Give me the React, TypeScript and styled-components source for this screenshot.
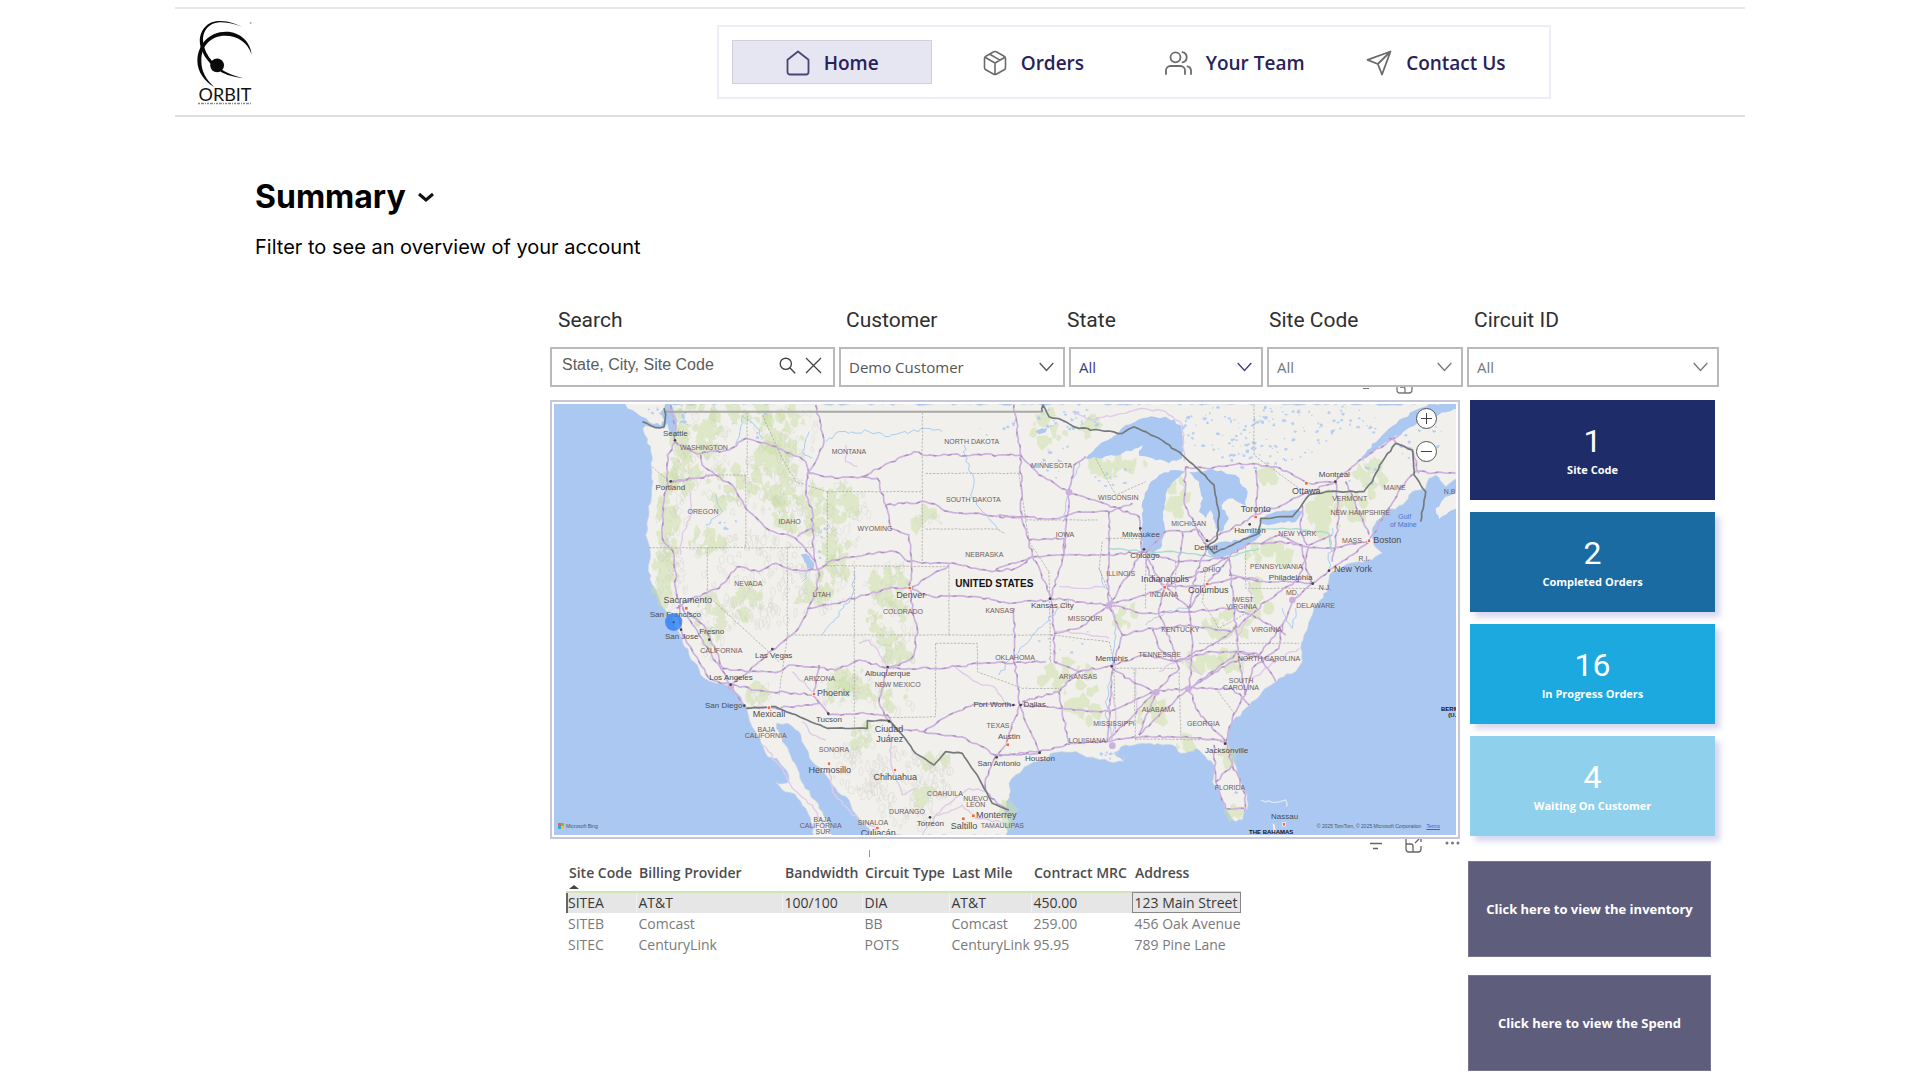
import React from "react";
import styled, { createGlobalStyle } from "styled-components";

const GlobalStyle = createGlobalStyle`
  *, *::before, *::after { box-sizing: border-box; }
  body { margin: 0; background: #ffffff; color: #000000; font-family: "Open Sans", "Noto Sans", sans-serif; }
  button, input, select { font: inherit; }
`;

const Page = styled.div`
  max-width: 1570px;
  margin: 0 auto;
  padding: 7px 0 9px;
`;

const Header = styled.header`
  display: flex;
  align-items: center;
  justify-content: space-between;
  padding: 0 194px 0 22px;
  border-top: 2px solid #e8e8e9;
  border-bottom: 2px solid #dfdfe1;
`;

const Brand = styled.a`
  display: flex;
  flex-direction: column;
  color: #111111;
  text-decoration: none;
  width: 56px;
`;

const BrandName = styled.span`
  font: 400 18px/14px Lato, sans-serif;
  text-align: center;
`;

const Nav = styled.nav`
  display: flex;
  gap: 1px;
  width: 834px;
  margin: 16px 0;
  padding: 13px;
  border: 2px solid #eeecf8;
`;

const NavLink = styled.a<{ $active?: boolean }>`
  flex: 1;
  display: flex;
  align-items: center;
  justify-content: center;
  gap: 14px;
  height: 44px;
  padding-top: 1px;
  font-size: 19px;
  font-weight: 600;
  color: #28225a;
  text-decoration: none;
  white-space: nowrap;
  background: ${(p) => (p.$active ? "#e6e5f2" : "transparent")};
  border: 1px solid ${(p) => (p.$active ? "#d2d1d9" : "transparent")};
  svg { flex: none; stroke: ${(p) => (p.$active ? "#4a4575" : "#6b6b6b")}; }
`;

const Intro = styled.section`
  margin: 60px 0 0 80px;
  font-family: Inter, sans-serif;
`;

const TitleRow = styled.div`
  display: flex;
  align-items: center;
  gap: 12px;
`;

const Title = styled.h1`
  margin: 0;
  font-size: 32px;
  line-height: 40px;
  font-weight: 700;
`;

const PlainButton = styled.button`
  display: flex;
  padding: 0;
  border: 0;
  background: none;
  cursor: pointer;
`;

const Subtitle = styled.p`
  margin: 18px 0 0;
  font-size: 20px;
  line-height: 24px;
`;

const Report = styled.main`
  margin: 49px 26px 0 375px;
`;

const LabelRow = styled.div`
  display: grid;
  grid-template-columns: 288fr 221fr 202fr 205fr 245fr;
  padding-left: 8px;
  font: 400 21px/24px Roboto, sans-serif;
  color: #2f2f2f;
`;

const FieldRow = styled.div`
  display: grid;
  grid-template-columns: 285fr 226fr 194fr 196fr 252fr;
  gap: 4px;
  margin-top: 15px;
`;

const Field = styled.div`
  display: flex;
  align-items: center;
  height: 40px;
  border: 2px solid #b9b9b9;
  background: #ffffff;
`;

const SearchInput = styled.input`
  flex: 1;
  min-width: 0;
  height: 36px;
  padding: 0 0 4px 10px;
  border: 0;
  outline: 0;
  background: none;
  font-family: "Liberation Sans", Arial, sans-serif;
  font-size: 16px;
  color: #5c5c5c;
  &::placeholder { color: #5c5c5c; opacity: 1; }
`;

const FieldIcons = styled.div`
  display: flex;
  gap: 9px;
  padding: 0 11px 3px 0;
`;

const SelectBox = styled(Field)<{ $tint: string }>`
  display: grid;
  color: ${(p) => p.$tint};
  > * { grid-area: 1 / 1; }
  > svg { justify-self: end; margin-right: 9px; pointer-events: none; }
`;

const Select = styled.select`
  width: 100%;
  height: 36px;
  padding: 0 30px 0 8px;
  border: 0;
  outline: 0;
  appearance: none;
  background: transparent;
  font-size: 15px;
  color: inherit;
`;

const Hints = styled.div`
  display: flex;
  gap: 27px;
  height: 13px;
  padding-left: 813px;
`;

const Columns = styled.div`
  display: grid;
  grid-template-columns: minmax(0, 910fr) minmax(0, 252fr);
  column-gap: 7px;
  align-items: start;
`;

const MapFrame = styled.section`
  position: relative;
  padding: 2px;
  border: 2px solid #c6c6d6;
`;

const MapSvg = styled.svg`
  display: block;
  width: 100%;
  aspect-ratio: 902 / 431;
  background: #abc8f2;
  font-family: "Liberation Sans", Arial, sans-serif;
`;

const ZoomControls = styled.div`
  position: absolute;
  top: 6px;
  right: 21px;
  display: flex;
  flex-direction: column;
  gap: 12px;
`;

const ZoomButton = styled.button`
  display: flex;
  align-items: center;
  justify-content: center;
  width: 21px;
  height: 21px;
  padding: 0;
  border: 1px solid #555555;
  border-radius: 50%;
  background: #ffffff;
`;

const MapCredit = styled.div<{ $side: "left" | "right" }>`
  position: absolute;
  bottom: 7px;
  ${(p) => (p.$side === "left" ? "left: 6px" : "right: 18px")};
  display: flex;
  align-items: center;
  gap: 2px;
  font: 400 5px/8px "Liberation Sans", Arial, sans-serif;
  color: #47566e;
  a { margin-left: 3px; color: #4560c0; }
`;

const VisualTools = styled.div`
  display: flex;
  justify-content: flex-end;
  gap: 23px;
  height: 24px;
`;

const TickMark = styled.span`
  width: 1px;
  height: 7px;
  margin: 11px auto 0 319px;
  background: #999999;
`;

const Table = styled.table`
  width: 675px;
  margin-left: 16px;
  table-layout: fixed;
  border-collapse: collapse;
  font-size: 14px;
  line-height: 20px;
  color: #7a7a7a;
  white-space: nowrap;
`;

const HeadCell = styled.th<{ $w: number }>`
  width: ${(p) => p.$w}px;
  height: 29px;
  padding: 0 0 0 3px;
  border-bottom: 2px solid #d5e3bb;
  text-align: left;
  vertical-align: top;
  font-weight: 600;
  color: #4c4c4c;
  svg { display: block; margin-top: 2px; }
`;

const Row = styled.tr<{ $selected?: boolean }>`
  height: 21px;
  background: ${(p) => (p.$selected ? "#e6e6e6" : "transparent")};
  color: ${(p) => (p.$selected ? "#3a3a3a" : "inherit")};
  td:first-child { box-shadow: ${(p) => (p.$selected ? "inset 2px 0 #666666" : "none")}; }
  td:last-child { outline: ${(p) => (p.$selected ? "1px solid #888888" : "none")}; outline-offset: -1px; }
  td + td { border-left: 1px solid ${(p) => (p.$selected ? "#f2f2f2" : "transparent")}; }
`;

const Cell = styled.td`
  padding: 0 0 0 2px;
`;

const CardStack = styled.div`
  display: flex;
  flex-direction: column;
  gap: 12px;
  padding: 0 4px 0 3px;
`;

const Card = styled.div<{ $bg: string; $raised: boolean }>`
  display: flex;
  flex-direction: column;
  align-items: center;
  height: 100px;
  padding-top: 22px;
  background: ${(p) => p.$bg};
  box-shadow: ${(p) => (p.$raised ? "5px 5px 6px #d6d6ef" : "none")};
  color: #ffffff;
`;

const CardValue = styled.span`
  font: 400 32px/38px Roboto, sans-serif;
`;

const CardLabel = styled.span`
  font-size: 11px;
  line-height: 20px;
  font-weight: 700;
`;

const ActionStack = styled.div`
  display: flex;
  flex-direction: column;
  gap: 18px;
  margin-top: 25px;
  padding: 0 8px 0 1px;
`;

const ActionButton = styled.button`
  height: 96px;
  padding: 0;
  border: 1px solid #77758f;
  background: #5f5d7c;
  color: #ffffff;
  font-size: 13px;
  font-weight: 700;
  cursor: pointer;
`;

/* ---------- icons ---------- */

const iconProps = { fill: "none", strokeWidth: 1.8, strokeLinecap: "round", strokeLinejoin: "round" } as const;

const HomeIcon = () => (
  <svg width="24" height="26" viewBox="0 0 24 26" {...iconProps} aria-hidden="true">
    <path d="M1.500 9.700 12 1.500l10.500 8.200V22a2.500 2.500 0 0 1-2.500 2.500H4A2.500 2.500 0 0 1 1.500 22Z" />
  </svg>
);
const BoxIcon = () => (
  <svg width="24" height="26" viewBox="0 0 24 26" {...iconProps} strokeWidth={1.6} aria-hidden="true">
    <path d="M10.800 1.800a2.400 2.400 0 0 1 2.400 0l8 4.400A2.400 2.400 0 0 1 22.500 8.300v9.400a2.400 2.400 0 0 1-1.300 2.100l-8 4.400a2.400 2.400 0 0 1-2.400 0l-8-4.400a2.400 2.400 0 0 1-1.300-2.100V8.300a2.400 2.400 0 0 1 1.300-2.100Z M2 7.200l10 5.800 10-5.800 M12 13v11.500 M6.800 4.200l10.200 5.900" />
  </svg>
);
const TeamIcon = () => (
  <svg width="27" height="26" viewBox="0 0 27 26" {...iconProps} aria-hidden="true">
    <circle cx="10.500" cy="7.300" r="5" />
    <path d="M1 24v-3.500a4.500 4.500 0 0 1 4.500-4.500h10a4.500 4.500 0 0 1 4.500 4.500V24 M17.500 2.200a5.200 5.200 0 0 1 0 10.200 M22.500 16.400a4.500 4.500 0 0 1 3.500 4.300V24" />
  </svg>
);
const SendIcon = () => (
  <svg width="26" height="26" viewBox="0 0 26 26" {...iconProps} aria-hidden="true">
    <path d="M24.500 1.500 1.500 9.800l10.300 4.200L16 24.500Z M24.500 1.500 11.800 14" />
  </svg>
);
const Chevron = () => (
  <svg width="15" height="10" viewBox="0 0 15 10" fill="none" stroke="currentColor" strokeWidth="1.300" aria-hidden="true">
    <path d="M.7 1 7.500 8.500 14.300 1" />
  </svg>
);

const Logo = () => (
  <svg width="56" height="68" viewBox="0 0 56 69" aria-hidden="true">
    <path fill="#0a0a0a" d="M48 9C38 4 24-1 13 4 2 10 0 23 5 33c3 7 7 11 12 16l2-2C13 41 9 36 7 29 4 19 6 10 15 5c10-4 23 0 33 4Z" />
    <path fill="#0a0a0a" d="M55 36C54 24 44 13 29 13 12 13 0 26 0 43c0 10 7 20 17 26C8 60 4 53 4 42 4 27 14 17 28 17c13 0 23 7 27 19Z" />
    <circle cx="20" cy="47" r="7" fill="#0a0a0a" />
    <path fill="#0a0a0a" d="M24 51c6 4 14 7 23 9-9-1-18-3-24-7Z" />
    <circle cx="54" cy="4" r="1" fill="#aaaaaa" />
  </svg>
);

/* ---------- map drawing ---------- */

type Pt = [number, number];

const parse = (s: string): Pt[] => s.trim().split(/\s+/).map((p) => p.split(",").map(Number) as Pt);

const randomFrom = (seed: number) => {
  let v = seed % 2147483647 || 7;
  return () => {
    v = (v * 48271) % 2147483647;
    return v / 2147483647;
  };
};

// Breaks each leg into short steps and nudges them, so lines look surveyed instead of ruled.
const rough = (s: string, amp: number, close = false) => {
  const pts = parse(s);
  if (close) pts.push(pts[0]);
  const rnd = randomFrom(Math.round(pts[0][0] * 31 + pts[0][1] * 17 + pts.length * 101 + 5));
  const out: string[] = [`M${pts[0][0]} ${pts[0][1]}`];
  for (let i = 1; i < pts.length; i++) {
    const [x0, y0] = pts[i - 1];
    const [x1, y1] = pts[i];
    const n = Math.max(1, Math.round(Math.hypot(x1 - x0, y1 - y0) / 13));
    for (let k = 1; k <= n; k++) {
      const j = k === n ? 0 : amp;
      const x = x0 + ((x1 - x0) * k) / n + (rnd() - 0.5) * j;
      const y = y0 + ((y1 - y0) * k) / n + (rnd() - 0.5) * j;
      out.push(`L${x.toFixed(1)} ${y.toFixed(1)}`);
    }
  }
  return out.join("") + (close ? "Z" : "");
};

// Scatter of small irregular patches inside an ellipse.
const scatter = (cx: number, cy: number, rx: number, ry: number, n: number, size: number, slant = 1) => {
  const rnd = randomFrom(Math.round(cx * 13 + cy * 7 + n));
  let d = "";
  for (let i = 0; i < n; i++) {
    const a = rnd() * Math.PI * 2;
    const r = Math.sqrt(rnd());
    const x = cx + Math.cos(a) * r * rx;
    const y = cy + Math.sin(a) * r * ry;
    const sides = 7;
    const base = size * (0.4 + rnd());
    for (let k = 0; k < sides; k++) {
      const t = (k / sides) * Math.PI * 2;
      const q = base * (0.4 + rnd() * 0.9);
      d += `${k ? "L" : "M"}${(x + Math.cos(t) * q).toFixed(1)} ${(y + Math.sin(t) * q * slant).toFixed(1)}`;
    }
    d += "Z";
  }
  return d;
};

const EAST = 1350;

const mainland =
  "365,27 375,50 385,75 380,100 375,125 362,118 355,85 345,100 318,98 290,92 282,100 295,130 305,170 308,220 312,260 308,300 300,350 296,400 290,420 300,450 304,490 298,530 310,570 330,610 345,640 355,655 372,680 385,705 400,740 420,780 445,810 455,840 480,858 520,865 545,880 565,895 580,920 592,940 605,985 625,1020 640,1050 650,1075 690,1100 715,1130 720,1160 700,1166 680,1160 700,1185 720,1192 745,1208 770,1240 785,1270 795,1322 850,1322 835,1280 820,1250 790,1210 765,1170 745,1120 720,1070 700,1040 690,1010 683,985 715,985 750,1010 765,1050 790,1100 830,1140 860,1180 900,1215 910,1245 930,1270 960,1300 970,1322 1370,1322 1380,1280 1365,1245 1372,1220 1385,1190 1380,1165 1400,1140 1440,1110 1490,1092 1505,1075 1540,1070 1590,1075 1640,1090 1680,1100 1725,1100 1695,1075 1730,1050 1780,1045 1840,1050 1870,1050 1895,1075 1940,1060 1970,1085 1995,1110 1990,1160 2015,1200 2030,1240 2060,1280 2080,1275 2095,1240 2095,1200 2065,1130 2045,1080 2035,1040 2045,990 2090,940 2140,890 2190,850 2240,830 2260,800 2255,760 2265,720 2285,670 2295,640 2335,590 2340,555 2350,530 2400,505 2430,500 2470,495 2500,475 2475,450 2470,400 2510,350 2560,330 2590,290 2630,280 2640,250 2660,240 2690,275 2724,250 2724,27";

const lakes = [
  "1610,190 1650,150 1700,120 1730,90 1780,70 1850,65 1895,90 1905,130 1900,190 1860,205 1810,190 1770,182 1780,150 1720,175 1660,190",
  "1780,470 1778,400 1780,320 1800,270 1830,240 1880,225 1910,230 1870,262 1850,300 1842,350 1850,410 1835,460 1810,475",
  "1920,232 1950,260 1962,310 1950,350 1970,370 1985,345 2000,400 2015,412 2040,370 2018,330 2050,310 2090,332 2096,290 2060,240 1990,222",
  "1975,460 2010,442 2070,435 2120,410 2138,420 2090,455 2040,480 2000,490 1978,476",
  "2130,376 2170,355 2230,345 2262,350 2240,380 2180,386 2140,386",
  "2640,27 2724,27 2724,42 2630,70 2570,105 2530,130 2450,190 2438,186 2500,120 2550,75 2600,45",
  "755,478 772,476 796,505 795,525 775,522",
  "1460,110 1480,100 1500,95 1490,112 1470,118",
];

const westRoads = [
  "365,30 380,110 378,140 355,180 355,260 345,320 340,430 375,480 383,600 410,660 440,700 500,800 545,870 590,940",
  "390,630 400,720 450,800 480,850 545,870",
  "415,650 470,700 510,790 525,825",
  "378,140 440,175 540,165 590,130 680,155 770,200 780,235 870,250 940,245 1000,215 1095,170 1120,180 1415,180",
  "365,260 500,240 550,270 600,350 660,405 740,430 800,500",
  "455,180 460,210 500,240",
  "800,30 825,140 800,200 775,235 770,300 790,340 790,400 745,425",
  "790,400 795,480 810,530 805,580 775,650 740,710 670,765 600,830 545,870",
  "383,640 430,610 510,580 565,515 630,530 680,505 730,525 800,525 850,495 960,475 1040,470 1080,500 1200,505 1330,530 1400,520 1450,485",
  "940,245 985,250 1010,330 1130,320 1200,350 1380,365 1430,368",
  "1010,330 1025,400 1080,420 1088,500 1083,580 1090,640 1105,700 1095,780 1070,800 1015,820 990,920 1020,980",
  "775,640 880,620 950,600 1020,580 1083,580 1150,605 1280,605 1380,625 1500,615",
  "1083,580 1140,545 1200,510",
  "520,820 600,830 690,830 720,810 860,825 930,795 1015,820 1160,820 1300,805 1490,800",
  "545,870 620,885 790,900 840,960 930,955 1015,960 1040,1000 1125,1010 1250,1030 1340,1080 1470,1075",
  "590,940 680,940 810,925",
  "1125,1010 1200,960 1290,925 1400,930",
  "810,810 800,850 795,900",
  "1340,1085 1310,1150 1310,1190 1375,1250",
];

const eastRoads = [
  "45,30 65,180 68,370 100,480 155,605",
  "65,180 120,240 210,290 300,320 420,365 430,470",
  "210,290 205,360 195,480 155,610 165,700 165,800",
  "45,640 45,780 62,930 20,1050 -5,1080",
  "210,290 225,210 260,185",
  "0,365 180,370 240,350 330,350 400,325",
  "90,435 195,430 195,480",
  "-10,525 100,485 190,480 330,480 430,470 540,500 680,490",
  "155,610 330,630 440,600 500,575 620,570 720,545 780,555",
  "430,470 360,580 330,630 370,720 340,810 325,1040",
  "330,350 330,480 325,560 330,630",
  "440,480 495,575 480,660 520,750 540,820 470,890 420,1020",
  "560,215 555,320 600,420 625,450 590,540 570,640 580,760 570,880 590,940 680,1040",
  "165,800 240,830 340,810 430,780 530,800 640,770 720,770 830,800",
  "60,930 190,940 330,950 470,890 570,880 700,880 750,930",
  "0,1080 120,1070 230,1045 320,1040 430,1025 560,1025 680,1040",
  "70,920 180,890 240,830",
  "180,890 190,950 210,1050",
  "62,930 120,1070",
  "340,820 400,860 470,890",
  "165,715 240,700 330,630",
  "680,1040 700,970 740,890 760,820 840,760 850,690 880,620 940,565 1000,520 1060,480 1110,440 1160,350 1220,260 1250,230 1370,235",
  "680,1040 700,1110 740,1200 735,1250",
  "645,1050 650,1160 680,1240 735,1240",
  "650,1160 700,1110",
  "530,800 640,750 700,710 800,620 900,550 930,450 1000,420",
  "420,1020 470,970 570,880 700,800 780,780 850,690",
  "690,490 700,580 710,700 720,800 740,900",
  "680,490 740,450 850,440 920,455 1000,460 1110,440",
  "690,540 780,560 900,560 940,565",
  "330,630 440,655 570,650 700,640 780,670 860,720",
  "625,440 700,400 770,360 850,330 930,290 1010,260 1090,190 1200,120",
  "560,215 620,220 720,205 830,215 930,265 1010,260",
  "1010,260 1020,370 1000,500",
  "1040,260 1110,420",
  "440,475 500,410 600,405 625,440",
  "500,575 540,500 550,410",
  "500,575 450,540 440,480",
  "495,575 590,540 680,490",
  "570,640 500,575",
  "570,640 620,570 690,490",
  "460,700 480,760 530,800",
  "370,720 460,700 570,690 700,710",
  "570,880 640,830 720,770",
  "470,890 330,1035",
  "720,770 780,780 830,860",
  "790,445 840,420 910,450 920,520 940,565",
  "910,330 905,400 925,450",
  "1170,130 1240,165 1260,235",
  "770,225 775,290 770,360",
];

const quietRoads = [
  "425,290 425,360 400,420 395,480",
  "760,980 790,1020 830,1035",
  "930,745 960,735 1000,790 1015,820",
  "1020,1000 1030,1120 1060,1200 1100,1180",
  "640,1050 700,1120 730,1180 790,1230 830,1310",
  "890,150 890,200 925,215",
  "1210,810 1280,860 1340,880 1370,930",
  "1150,1270 1240,1230 1280,1270 1380,1285",
  "1120,1320 1180,1240 1260,1180 1310,1190",
  "730,830 790,890",
  "840,1120 850,1190 910,1260 985,1300",
  "1570,50 1630,75 1700,60 1780,40 1850,50 1900,90 1905,200",
  "1530,575 1600,580 1680,575",
  "1520,710 1600,715 1680,730",
  "1690,890 1700,960 1690,1030",
  "1760,820 1760,960",
  "1830,830 1900,790 1960,840",
  "2100,560 2110,640 2060,740",
  "2250,760 2180,800 2110,850",
];

const stateLines = [
  "1120,52 1120,500", "1130,235 1410,235", "1130,402 1340,402 1370,415", "835,290 1120,290", "835,290 835,510", "820,512 1200,515",
  "1200,515 1200,720", "300,458 790,458", "715,458 715,720 690,900", "475,458 475,600 690,800", "916,515 916,1000", "715,720 1520,720",
  "1160,745 1160,965 1020,968", "1160,745 1285,745 1285,830 1340,850 1420,880 1530,880", "590,240 590,458", "310,215 365,265 500,240 590,240",
  "595,50 595,240", "640,60 700,190 740,260 835,290", "1430,375 1645,375", "1500,530 1505,800", "1690,820 1880,820", "1695,830 1700,1010",
  "1755,820 1760,1040", "1890,820 1895,1020", "1760,1032 2030,1035", "1790,480 1790,640", "2090,455 2090,580 2330,580", "1950,745 2250,745",
  "1670,430 1780,430", "2115,30 2115,180 2250,280", "1410,235 1430,375 1440,440 1500,530", "1505,720 1680,740 1700,820", "1660,440 1650,520 1700,640",
  "1880,500 1880,600", "1970,520 1960,620 2010,700 2100,650", "2000,880 2060,960", "1640,190 1700,300 1790,260",
];

const faintRivers = [
  "830,140 870,110 960,110 1020,125 1130,100 1180,110", "1245,150 1250,200 1275,250 1265,300 1300,350 1350,405", "915,530 910,600 860,670 820,720",
  "560,150 580,60 620,95 640,130", "500,300 520,350 470,390", "1350,840 1400,780 1450,720 1520,650 1560,620", "1650,520 1680,600 1700,700 1690,820 1670,950 1690,1040",
  "1790,690 1850,650 1920,640", "760,560 790,520", "780,110 760,170 790,190", "2240,640 2230,700 2200,640", "2350,400 2340,520", "1600,190 1560,280 1540,380",
];

const greens: [number, number, number, number, number][] = [
  [440, 110, 70, 90, 38], [360, 380, 34, 150, 44], [345, 540, 40, 90, 26], [410, 230, 50, 60, 18], [530, 270, 60, 60, 22], [670, 240, 70, 90, 56],
  [700, 110, 70, 70, 30], [720, 350, 50, 60, 20], [790, 340, 40, 80, 20], [880, 340, 50, 70, 26], [860, 450, 45, 50, 14], [1020, 570, 60, 60, 26],
  [1010, 680, 70, 60, 24], [1040, 780, 40, 40, 14], [930, 870, 60, 45, 20], [860, 870, 45, 50, 18], [850, 560, 45, 60, 16], [590, 620, 50, 60, 16],
  [480, 680, 40, 80, 22], [620, 900, 30, 30, 8], [470, 440, 60, 40, 12], [1130, 370, 30, 30, 6], [1130, 1210, 30, 40, 10], [940, 1030, 30, 40, 10],
  [1160, 1100, 40, 20, 8], [1020, 900, 50, 40, 10], [780, 600, 40, 40, 10], [540, 50, 60, 20, 12], [640, 60, 60, 25, 12],
  [1500, 100, 50, 50, 14], [1620, 88, 34, 18, 10], [1700, 210, 90, 30, 26], [1880, 300, 40, 60, 14], [2165, 245, 38, 22, 14], [2320, 345, 34, 55, 32],
  [1960, 800, 60, 30, 20], [2050, 690, 80, 50, 22], [2120, 620, 50, 50, 14], [1560, 850, 80, 50, 18], [1720, 660, 40, 40, 10], [1800, 950, 60, 50, 10],
  [1910, 1045, 40, 14, 8], [2030, 1090, 20, 30, 6], [2055, 1250, 22, 22, 6], [2170, 480, 80, 30, 12], [2470, 240, 60, 60, 14], [2400, 350, 50, 60, 12],
  [1590, 930, 60, 60, 10], [2060, 790, 40, 30, 10], [1380, 1260, 20, 30, 6],
];

const ponds: [number, number, number, number, number][] = [
  [1560, 70, 100, 35, 40], [2010, 100, 110, 70, 44], [2200, 120, 140, 90, 60], [2400, 80, 100, 50, 26], [2620, 150, 70, 70, 16], [2450, 250, 60, 60, 14],
  [1520, 190, 60, 60, 12], [1700, 250, 80, 40, 12], [2100, 180, 90, 40, 26], [610, 90, 60, 50, 9], [820, 440, 20, 60, 5], [520, 380, 50, 30, 5],
  [400, 80, 16, 50, 12], [1350, 100, 60, 50, 8], [1560, 760, 120, 60, 10], [2060, 1200, 10, 10, 2], [1680, 1085, 60, 14, 14], [330, 45, 50, 16, 8],
];

type Label = [string, number, number];
const stateLabels: Label[] = [
  ["WASHINGTON", 465, 165], ["OREGON", 462, 357], ["IDAHO", 722, 387], ["MONTANA", 900, 176], ["NORTH DAKOTA", 1268, 148], ["SOUTH DAKOTA", 1273, 322],
  ["WYOMING", 978, 408], ["NEBRASKA", 1306, 486], ["NEVADA", 598, 573], ["UTAH", 818, 605], ["COLORADO", 1062, 657], ["KANSAS", 1352, 653],
  ["CALIFORNIA", 517, 775], ["ARIZONA", 812, 857], ["NEW MEXICO", 1046, 875], ["TEXAS", 1347, 999], ["OKLAHOMA", 1398, 794], ["SONORA", 855, 1072],
  ["BAJA", 652, 1012], ["CALIFORNIA", 650, 1030], ["COAHUILA", 1188, 1204], ["DURANGO", 1074, 1258], ["SINALOA", 972, 1290], ["NUEVO", 1280, 1217], ["LEÓN", 1280, 1235],
  ["BAJA", 820, 1281], ["CALIFORNIA", 815, 1299], ["SUR", 822, 1316], ["TAMAULIPAS", 1360, 1300],
  ["MINNESOTA", 1508, 219], ["WISCONSIN", 1708, 316], ["MICHIGAN", 1919, 393], ["IOWA", 1548, 425], ["ILLINOIS", 1715, 544], ["INDIANA", 1845, 605],
  ["OHIO", 1988, 532], ["MISSOURI", 1608, 679], ["KENTUCKY", 1894, 711], ["TENNESSEE", 1832, 786], ["ARKANSAS", 1587, 853], ["MISSISSIPPI", 1695, 994],
  ["ALABAMA", 1828, 950], ["GEORGIA", 1963, 994], ["LOUISIANA", 1615, 1043], ["FLORIDA", 2043, 1186], ["SOUTH", 2076, 864], ["CAROLINA", 2076, 886],
  ["NORTH CAROLINA", 2160, 797], ["VIRGINIA", 2153, 711], ["WEST", 2084, 621], ["VIRGINIA", 2078, 643], ["PENNSYLVANIA", 2182, 521], ["NEW YORK", 2245, 422],
  ["MAINE", 2537, 284], ["VERMONT", 2402, 318], ["NEW HAMPSHIRE", 2434, 361], ["MASS.", 2412, 444], ["R.I.", 2445, 497], ["N.J.", 2328, 586], ["MD.", 2230, 601], ["DELAWARE", 2300, 640], ["N.B.", 2705, 297],
];
const largeCities: Label[] = [
  ["Sacramento", 416, 625], ["Mexicali", 660, 965], ["Phoenix", 853, 904], ["Denver", 1085, 608], ["Ciudad", 1020, 1010], ["Juárez", 1022, 1040],
  ["Hermosillo", 842, 1134], ["Chihuahua", 1039, 1154], ["Culiacán", 988, 1324], ["Saltillo", 1245, 1301], ["Monterrey", 1342, 1270],
  ["Indianapolis", 1848, 560], ["Columbus", 1978, 594], ["Toronto", 2120, 350], ["Ottawa", 2272, 296], ["Boston", 2515, 444], ["New York", 2412, 532],
];
const smallCities: Label[] = [
  ["Seattle", 379, 122], ["Portland", 364, 286], ["San Francisco", 379, 665], ["San Jose", 398, 732], ["Fresno", 488, 717],
  ["Las Vegas", 674, 790], ["Los Angeles", 546, 855], ["San Diego", 524, 940], ["Tucson", 840, 982], ["Albuquerque", 1016, 843],
  ["Torreón", 1144, 1293], ["Fort Worth", 1330, 935], ["Dallas", 1457, 936], ["Austin", 1380, 1031], ["San Antonio", 1350, 1114], ["Houston", 1473, 1099],
  ["Kansas City", 1510, 640], ["Memphis", 1688, 797], ["Milwaukee", 1776, 426], ["Chicago", 1788, 489], ["Detroit", 1971, 465], ["Hamilton", 2103, 415],
  ["Montréal", 2356, 245], ["Philadelphia", 2225, 555], ["Jacksonville", 2033, 1075], ["Nassau", 2207, 1272],
];
const capitals: Pt[] = [[412, 640], [1082, 579], [795, 897], [660, 938], [840, 1106], [1038, 1125], [985, 1299], [1243, 1271], [1273, 1262], [1376, 1049], [1847, 577], [1975, 567], [2120, 366], [2272, 265], [2460, 437], [2205, 1288]];
const towns: Pt[] = [[378, 136], [365, 259], [396, 704], [481, 734], [670, 762], [545, 869], [586, 932], [838, 956], [1020, 979], [1016, 816], [1143, 1267], [1343, 1087], [1393, 930], [1415, 930], [1472, 1073], [1503, 611], [1688, 814], [1774, 400], [1785, 463], [1974, 437], [2102, 388], [2359, 260], [2340, 527], [2291, 566], [2028, 1046]];
const hubs: Pt[] = [[1560, 292], [1680, 632], [1918, 882], [1822, 892], [545, 875], [1690, 1052], [2230, 615]];

const UsMap = () => (
  <MapSvg viewBox="15 27 2706 1293" role="img" aria-label="Map of the United States">
    <path d={rough("220,20 250,45 270,60 300,80 335,92 345,75 330,55 345,40 348,20", 9, true)} fill="#f1f0ed" />
    <path d={rough(mainland, 9, true)} fill="#f1f0ed" stroke="#c9d3de" strokeWidth="2" />
    <path d={rough("2660,340 2690,305 2724,290 2724,340 2700,350 2670,372", 8, true)} fill="#f1f0ed" />
    <path d={rough("2135,1215 2170,1222 2210,1215 2212,1235", 8)} fill="none" stroke="#dfe8ee" strokeWidth="4" />
    <path d={rough("2170,1285 2178,1290 2182,1312 2172,1312", 4, true)} fill="#f1f0ed" />
    {greens.map(([x, y, rx, ry, n], i) => (
      <path key={i} d={scatter(x, y, rx, ry, n, 15, 1.3)} fill="#cbe0a4" opacity="0.5" />
    ))}
    {greens.slice(0, 27).map(([x, y, rx, ry, n], i) => (
      <path key={i} d={scatter(x + 12, y + 9, rx * 1.4, ry * 1.3, n, 8, 1.6)} fill="none" stroke="#c3c8b8" strokeWidth="1.500" opacity="0.55" />
    ))}
    <path d={scatter(1090, 1170, 130, 130, 90, 8, 1.6) + scatter(930, 1120, 80, 90, 50, 8, 1.6) + scatter(620, 560, 160, 150, 110, 8, 1.8)} fill="none" stroke="#dddcd5" strokeWidth="2" />
    {lakes.map((s, i) => <path key={i} d={rough(s, 9, true)} fill="#abc8f2" />)}
    {ponds.map(([x, y, rx, ry, n], i) => <path key={i} d={scatter(x, y, rx, ry, n, 5, 0.8)} fill="#b5cef2" />)}
    <g fill="none" strokeLinejoin="round">
      {faintRivers.map((s, i) => <path key={i} d={rough(s, 12)} stroke="#a9cdf0" strokeWidth="3" />)}
      {stateLines.map((s, i) => <path key={i} d={rough(s, 2)} stroke="#9b9b98" strokeWidth="2" strokeDasharray="7 4" />)}
      <path d={rough("1680,460 1800,470 1900,472 2020,490 2130,460", 5)} stroke="#a6dccb" strokeWidth="4" />
      <path d={rough("2130,400 2250,402 2340,415 2350,470", 5)} stroke="#a6dccb" strokeWidth="4" />
      {quietRoads.map((s, i) => <path key={i} d={rough(s, 8)} stroke="#dfcae8" strokeWidth="4" />)}
      {westRoads.map((s, i) => (
        <g key={i}>
          <path d={rough(s, 7)} stroke="#ccb0df" strokeWidth="5" />
          <path d={rough(s, 7)} stroke="#ae93ba" strokeWidth="4" strokeDasharray="12 34" />
        </g>
      ))}
      <g transform={`translate(${EAST} 0)`}>
        {eastRoads.map((s, i) => (
          <g key={i}>
            <path d={rough(s, 7)} stroke="#ccb0df" strokeWidth="5" />
            <path d={rough(s, 7)} stroke="#ae93ba" strokeWidth="4" strokeDasharray="9 32" />
          </g>
        ))}
      </g>
      <path d="M345 50H1480" stroke="#a8a8a6" strokeWidth="6" />
      <g stroke="#747a7c" strokeWidth="5">
        <path d={rough("1480,50 1482,30 1500,65 1550,80 1590,100 1650,105 1720,115 1755,95", 7)} />
        <path d={rough("1755,95 1830,130 1900,180 1950,225 1995,270 2010,350 2005,430 1975,455 1995,475 2050,450 2130,415 2135,370 2230,365 2280,300 2330,290 2445,290 2470,260 2500,200 2540,145 2590,165 2595,240 2630,290 2615,380", 4)} />
        <path d={rough("592,940 680,935 835,1000 955,1000 955,977 1020,977 1060,1020 1100,1075 1155,1110 1190,1070 1240,1075 1290,1150 1305,1180 1330,1225 1380,1245", 3)} />
        <path d={rough("280,80 320,98 345,95 350,60 345,40", 4)} />
      </g>
    </g>
    {hubs.map(([x, y], i) => <circle key={i} cx={x} cy={y} r="10" fill="#ccb0df" />)}
    <g fontSize="21" fill="#6f5b60" textAnchor="middle">
      {stateLabels.map(([t, x, y], i) => <text key={i} x={x} y={y}>{t}</text>)}
    </g>
    {towns.map(([x, y], i) => <circle key={i} cx={x} cy={y} r="4" fill="#444444" />)}
    {capitals.map(([x, y], i) => <rect key={i} x={x - 5} y={y - 5} width="10" height="10" fill="#f0683c" stroke="#ffffff" strokeWidth="2" />)}
    <g fontSize="27" fill="#4c4c50" textAnchor="middle">
      {largeCities.map(([t, x, y], i) => <text key={i} x={x} y={y}>{t}</text>)}
    </g>
    <g fontSize="24" fill="#4c4c50" textAnchor="middle">
      {smallCities.map(([t, x, y], i) => <text key={i} x={x} y={y}>{t}</text>)}
    </g>
    <text x="1336" y="575" fontSize="30" fontWeight="700" textAnchor="middle" fill="#111111">UNITED STATES</text>
    <g fontSize="18" fontWeight="700" fill="#111111">
      <text x="2100" y="1317">THE BAHAMAS</text>
      <text x="2676" y="949">BERMUDA</text>
      <text x="2698" y="967">(U.K.)</text>
    </g>
    <g fontSize="21" fill="#4d74c9" textAnchor="middle">
      <text x="2567" y="373">Gulf</text>
      <text x="2563" y="396">of Maine</text>
    </g>
    <circle cx="374" cy="681" r="26" fill="#2f80f2" fillOpacity="0.82" />
    <circle cx="374" cy="682" r="3" fill="#22466f" />
  </MapSvg>
);

/* ---------- data ---------- */

const nav = [
  { label: "Home", icon: <HomeIcon />, active: true },
  { label: "Orders", icon: <BoxIcon /> },
  { label: "Your Team", icon: <TeamIcon /> },
  { label: "Contact Us", icon: <SendIcon /> },
];

const filters = [
  { id: "customer", label: "Customer", value: "Demo Customer", tint: "#555555" },
  { id: "state", label: "State", value: "All", tint: "#3f3c78" },
  { id: "site", label: "Site Code", value: "All", tint: "#777777" },
  { id: "circuit", label: "Circuit ID", value: "All", tint: "#777777" },
];

const columns: [string, number][] = [
  ["Site Code", 70], ["Billing Provider", 146], ["Bandwidth", 80], ["Circuit Type", 87], ["Last Mile", 82], ["Contract MRC", 101], ["Address", 109],
];

const rows = [
  ["SITEA", "AT&T", "100/100", "DIA", "AT&T", "450.00", "123 Main Street"],
  ["SITEB", "Comcast", "", "BB", "Comcast", "259.00", "456 Oak Avenue"],
  ["SITEC", "CenturyLink", "", "POTS", "CenturyLink", "95.95", "789 Pine Lane"],
];

const cards = [
  { value: 1, label: "Site Code", bg: "#1e2d69" },
  { value: 2, label: "Completed Orders", bg: "#1a6ba2" },
  { value: 16, label: "In Progress Orders", bg: "#1ba9df" },
  { value: 4, label: "Waiting On Customer", bg: "#8fd0ec" },
];

export default function App() {
  return (
    <>
      <GlobalStyle />
      <Page>
        <Header>
          <Brand href="#home">
            <Logo />
            <BrandName>ORBIT</BrandName>
            <svg width="56" height="4" viewBox="0 0 56 4" aria-hidden="true">
              <path d="M1 2.500H55" stroke="#888888" strokeWidth="1.500" strokeDasharray="2 1 3 1 1 1" />
            </svg>
          </Brand>
          <Nav>
            {nav.map((n) => (
              <NavLink key={n.label} href="#" $active={n.active}>
                {n.icon}
                {n.label}
              </NavLink>
            ))}
          </Nav>
        </Header>

        <Intro>
          <TitleRow>
            <Title>Summary</Title>
            <PlainButton aria-label="Toggle summary">
              <svg width="16" height="10" viewBox="0 0 16 10" fill="none" stroke="#111111" strokeWidth="3" aria-hidden="true">
                <path d="M1 2 8 8l7-6" />
              </svg>
            </PlainButton>
          </TitleRow>
          <Subtitle>Filter to see an overview of your account</Subtitle>
        </Intro>

        <Report>
          <LabelRow>
            <label htmlFor="search">Search</label>
            {filters.map((f) => <label key={f.id} htmlFor={f.id}>{f.label}</label>)}
          </LabelRow>
          <FieldRow>
            <Field>
              <SearchInput id="search" placeholder="State, City, Site Code" />
              <FieldIcons>
                <PlainButton aria-label="Run search">
                  <svg width="17" height="17" viewBox="0 0 17 17" fill="none" stroke="#444444" strokeWidth="1.400">
                    <circle cx="6.800" cy="6.800" r="5.600" />
                    <path d="m10.800 10.800 5.400 5.400" />
                  </svg>
                </PlainButton>
                <PlainButton aria-label="Clear search">
                  <svg width="17" height="17" viewBox="0 0 17 17" fill="none" stroke="#444444" strokeWidth="1.300">
                    <path d="m1 1 15 15M16 1 1 16" />
                  </svg>
                </PlainButton>
              </FieldIcons>
            </Field>
            {filters.map((f) => (
              <SelectBox key={f.id} $tint={f.tint}>
                <Select id={f.id} defaultValue={f.value}>
                  <option>{f.value}</option>
                </Select>
                <Chevron />
              </SelectBox>
            ))}
          </FieldRow>
          <Hints aria-hidden="true">
            <svg width="6" height="4"><path d="M0 1.500h6" stroke="#777777" /></svg>
            <svg width="17" height="7" fill="none" stroke="#777777" strokeWidth="1.300">
              <path d="M1 0v3a3 3 0 0 0 3 3h9a3 3 0 0 0 3-3V0M4 0h3a2 2 0 0 1 2 2v4" />
            </svg>
          </Hints>

          <Columns>
            <div>
              <MapFrame>
                <UsMap />
                <ZoomControls>
                  <ZoomButton aria-label="Zoom in">
                    <svg width="11" height="11" stroke="#444444"><path d="M0 5.500h11M5.500 0v11" /></svg>
                  </ZoomButton>
                  <ZoomButton aria-label="Zoom out">
                    <svg width="11" height="11" stroke="#444444"><path d="M0 5.500h11" /></svg>
                  </ZoomButton>
                </ZoomControls>
                <MapCredit $side="left">
                  <svg width="6" height="6" aria-hidden="true">
                    <path d="M0 0h3v3H0z" fill="#e8663c" />
                    <path d="M3 0h3v3H3z" fill="#86b93a" />
                    <path d="M0 3h3v3H0z" fill="#2fa5e6" />
                    <path d="M3 3h3v3H3z" fill="#f3c136" />
                  </svg>
                  Microsoft Bing
                </MapCredit>
                <MapCredit $side="right">
                  © 2025 TomTom, © 2025 Microsoft Corporation <a href="#terms">Terms</a>
                </MapCredit>
              </MapFrame>
              <VisualTools aria-hidden="true">
                <TickMark />
                <svg width="12" height="14" stroke="#666666" strokeWidth="1.500"><path d="M0 4.500h12M3 9.500h5" /></svg>
                <svg width="17" height="14" fill="none" stroke="#666666" strokeWidth="1.300">
                  <path d="M1 0v10a3 3 0 0 0 3 3h9a3 3 0 0 0 3-3V7M1 5h5a2 2 0 0 1 2 2v6M10 4l4-4M16 0v3" />
                </svg>
                <svg width="15" height="14" fill="#777777">
                  <circle cx="2" cy="4" r="1.500" /><circle cx="7.500" cy="4" r="1.500" /><circle cx="13" cy="4" r="1.500" />
                </svg>
              </VisualTools>
              <Table>
                <thead>
                  <tr>
                    {columns.map(([name, w], i) => (
                      <HeadCell key={name} $w={w} scope="col">
                        {name}
                        {i === 0 && <svg width="10" height="4" aria-hidden="true"><path d="M0 4 5 0l5 4Z" fill="#444444" /></svg>}
                      </HeadCell>
                    ))}
                  </tr>
                </thead>
                <tbody>
                  {rows.map((r, i) => (
                    <Row key={r[0]} $selected={i === 0}>
                      {r.map((c, k) => <Cell key={k}>{c}</Cell>)}
                    </Row>
                  ))}
                </tbody>
              </Table>
            </div>

            <aside>
              <CardStack>
                {cards.map((c, i) => (
                  <Card key={c.label} $bg={c.bg} $raised={i > 0}>
                    <CardValue>{c.value}</CardValue>
                    <CardLabel>{c.label}</CardLabel>
                  </Card>
                ))}
              </CardStack>
              <ActionStack>
                <ActionButton>Click here to view the inventory</ActionButton>
                <ActionButton>Click here to view the Spend</ActionButton>
              </ActionStack>
            </aside>
          </Columns>
        </Report>
      </Page>
    </>
  );
}
